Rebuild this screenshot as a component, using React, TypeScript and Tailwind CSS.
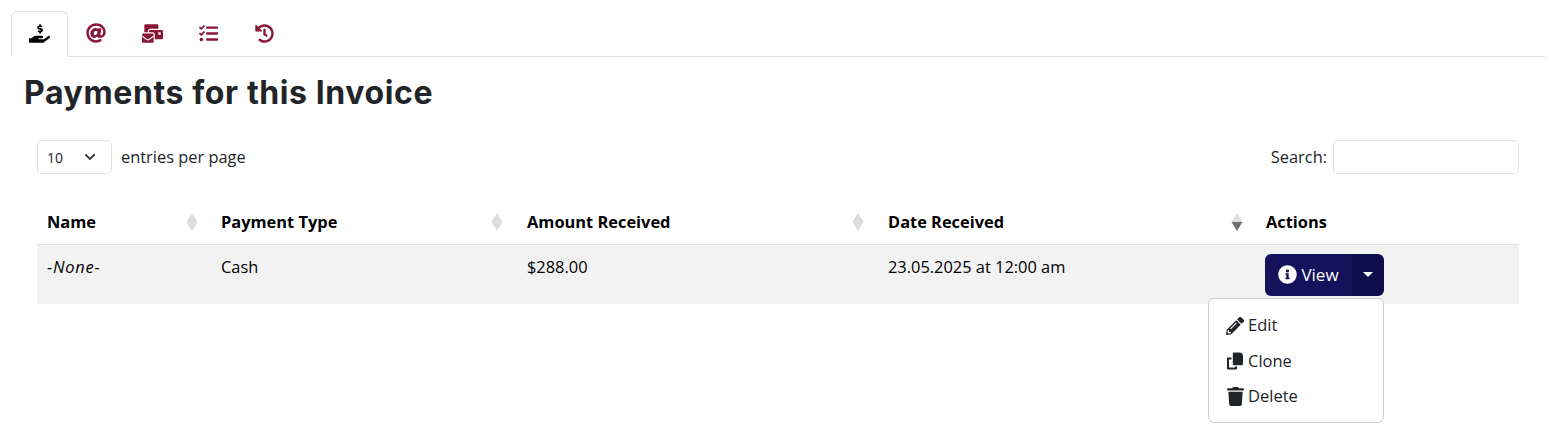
import { FaHandHoldingUsd, FaAt, FaMailBulk, FaTasks, FaHistory, FaInfoCircle, FaPencilAlt, FaTrash, FaChevronDown } from "react-icons/fa";

function Sort({ active, wide }: { active?: boolean; wide?: boolean }) {
  return (
    <svg width="12" height="18" viewBox="0 0 12 18" className={wide ? "absolute right-[14px] top-[9px]" : "absolute right-[13px] top-[9px]"}>
      <polygon points="6,0 11.5,9 0.5,9" fill="#dddddd" />
      <polygon points="6,18 11.5,9 0.5,9" fill={active ? "#6f6f6f" : "#dddddd"} />
    </svg>
  );
}

function CloneIcon() {
  return (
    <svg width="18" height="18" viewBox="0 0 18 18" fill="#212529">
      <path d="M8 0.5h5.5c2 0 3.5 1.5 3.5 3.5v8a1.2 1.2 0 0 1-1.2 1.2H8a1.2 1.2 0 0 1-1.2-1.2V1.7A1.2 1.2 0 0 1 8 0.5z" />
      <path d="M1 5.5h4.5v2H3V15.5h6V14.5h2V16.5a1 1 0 0 1-1 1H2a1 1 0 0 1-1-1z" />
    </svg>
  );
}

const tabs: [typeof FaAt, number][] = [[FaAt, 20], [FaMailBulk, 21], [FaTasks, 19], [FaHistory, 19]];

export default function App() {
  return (
    <div className="w-[1549px] h-[433px] overflow-hidden bg-white text-[#212529] text-[16px] font-['Open_Sans','Noto_Sans',sans-serif]">
      <div className="pt-[11px] pl-[11px] pr-[4px]">
        <div className="flex border-b border-[#dee2e6] h-[46px]">
          <div className="w-[57px] h-[46px] pb-[2px] bg-white border border-[#dee2e6] border-b-white rounded-t-[6px] flex items-center justify-center text-black">
            <FaHandHoldingUsd size={21} />
          </div>
          {tabs.map(([Icon, size], i) => (
            <div key={i} className="w-[56px] h-[46px] pb-[2px] flex items-center justify-center text-[#8b1538]">
              <Icon size={size} />
            </div>
          ))}
        </div>
      </div>
      <h1 className="ml-[24px] mt-[16px] text-[32px] leading-[40px] font-bold font-['Inter',sans-serif] tracking-[0.6px] text-[#212529]">
        Payments for this Invoice
      </h1>
      <div className="ml-[37px] w-[1482px] mt-[27px] flex items-center justify-between h-[34px]">
        <div className="flex items-center gap-[9px]">
          <div className="w-[75px] h-[34px] border border-[#dee2e6] rounded-[5px] flex items-center justify-between pl-[9px] pr-[15px] text-[14px]">
            <span>10</span>
            <FaChevronDown size={12} className="text-[#343a40]" />
          </div>
          <span className="text-[16.4px]">entries per page</span>
        </div>
        <div className="flex items-center gap-[6px]">
          <span className="text-[16.4px]">Search:</span>
          <input aria-label="Search" className="w-[186px] h-[34px] border border-[#dee2e6] rounded-[5px]" />
        </div>
      </div>
      <div className="relative ml-[37px] w-[1482px] mt-[30px]">
        <table className="w-full table-fixed border-collapse text-[16.4px] text-black">
          <colgroup>
            <col className="w-[174px]" />
            <col className="w-[306px]" />
            <col className="w-[361px]" />
            <col className="w-[378px]" />
            <col className="w-[263px]" />
          </colgroup>
          <thead>
            <tr className="h-[40px] border-b border-[#dee2e6] text-left">
              <th className="relative px-[10px] pb-[2px] font-bold"><span>Name</span><Sort /></th>
              <th className="relative px-[10px] pb-[2px] font-bold"><span>Payment Type</span><Sort wide /></th>
              <th className="relative px-[10px] pb-[2px] font-bold"><span>Amount Received</span><Sort wide /></th>
              <th className="relative px-[10px] pb-[2px] font-bold"><span>Date Received</span><Sort active /></th>
              <th className="px-[10px] pb-[2px] font-bold">Actions</th>
            </tr>
          </thead>
          <tbody>
            <tr className="h-[60px] bg-[#f2f2f2] align-top">
              <td className="px-[10px] pt-[10px] italic tracking-[0.8px]">-None-</td>
              <td className="px-[10px] pt-[10px]">Cash</td>
              <td className="px-[10px] pt-[10px]">$288.00</td>
              <td className="px-[10px] pt-[10px]">23.05.2025 at 12:00 am</td>
              <td className="pl-[9px] pt-[9px]">
                <div className="flex w-[119px] h-[42px] rounded-[6px] overflow-hidden text-white text-[17px]">
                  <div className="w-[87px] bg-[#14125a] flex items-center justify-center gap-[4px]">
                    <FaInfoCircle size={19} />
                    <span>View</span>
                  </div>
                  <div className="w-[32px] bg-[#0f0d4c] flex items-center justify-center">
                    <span className="w-0 h-0 border-x-[5px] border-x-transparent border-t-[5px] border-t-white" />
                  </div>
                </div>
              </td>
            </tr>
          </tbody>
        </table>
        <div className="absolute left-[1171px] top-[94px] w-[176px] h-[125px] bg-white border border-[#cccccc] rounded-[6px] pt-[9px] pl-[17px] text-[#212529] text-[16.5px] flex flex-col">
          <div className="h-[35px] flex items-center gap-[4px]"><FaPencilAlt size={18} /><span>Edit</span></div>
          <div className="h-[35px] pt-[1px] flex items-center gap-[4px]"><CloneIcon /><span>Clone</span></div>
          <div className="h-[35px] pt-[1px] flex items-center gap-[3px]"><FaTrash size={19} /><span>Delete</span></div>
        </div>
      </div>
    </div>
  );
}
